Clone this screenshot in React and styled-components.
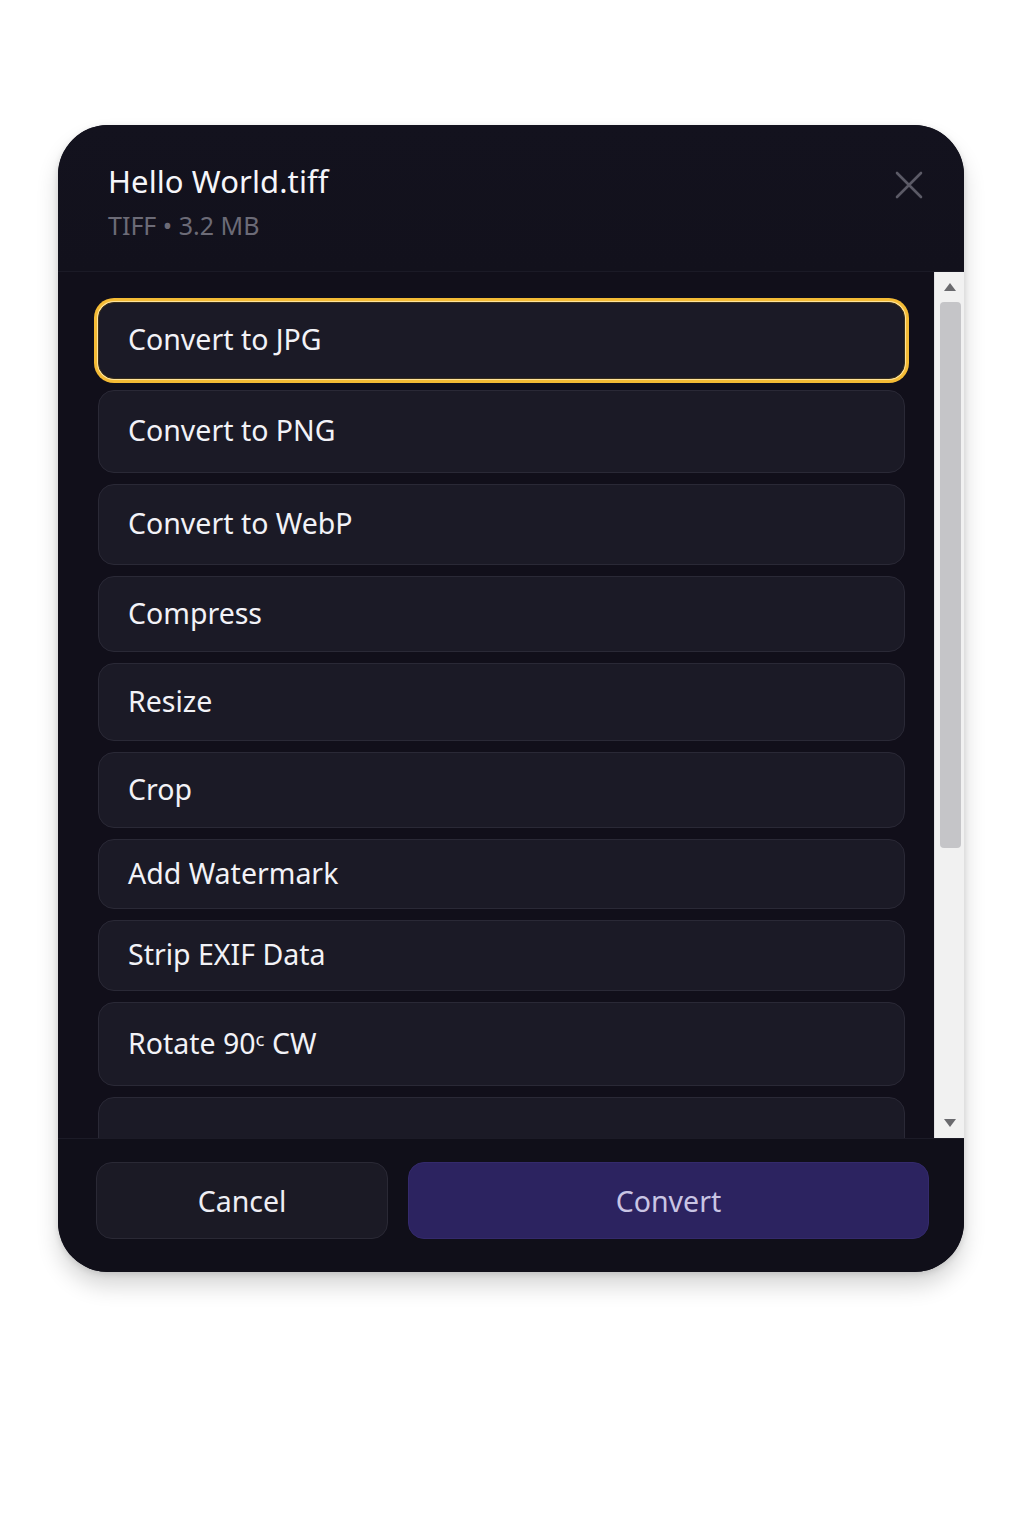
import React from "react";
import styled, { createGlobalStyle } from "styled-components";

const GlobalStyle = createGlobalStyle`
  html, body {
    margin: 0;
    padding: 0;
    background: #ffffff;
  }
  body {
    font-family: "Noto Sans", "Open Sans", "Liberation Sans", sans-serif;
  }
  * {
    box-sizing: border-box;
  }
`;

// row heights follow the reference list, which isn't perfectly even
const ACTIONS = [
  { label: "Convert to JPG", h: 77 },
  { label: "Convert to PNG", h: 83 },
  { label: "Convert to WebP", h: 81 },
  { label: "Compress", h: 76 },
  { label: "Resize", h: 78 },
  { label: "Crop", h: 76 },
  { label: "Add Watermark", h: 70 },
  { label: "Strip EXIF Data", h: 71 },
  { label: "Rotate 90\u1D9C CW", h: 84 },
  { label: "", h: 80 },
];

export default function App() {
  return (
    <>
      <GlobalStyle />
      <Page>
        <Modal>
          <Header>
            <div>
              <Title>Hello World.tiff</Title>
              <Meta>TIFF • 3.2 MB</Meta>
            </div>
            <CloseButton aria-label="Close">
              <svg width="28" height="28" viewBox="0 0 28 28" fill="none">
                <path
                  d="M2 2L26 26M26 2L2 26"
                  stroke="#5b5a66"
                  strokeWidth="2.6"
                  strokeLinecap="round"
                />
              </svg>
            </CloseButton>
          </Header>
          <Body>
            <List>
              {ACTIONS.map((a, i) => (
                <Item key={i} $active={i === 0} $h={a.h}>
                  {a.label}
                </Item>
              ))}
            </List>
            <Scrollbar>
              <Arrow>
                <svg width="14" height="10" viewBox="0 0 14 10">
                  <path d="M7 1L13 9H1Z" fill="#6a6a6e" />
                </svg>
              </Arrow>
              <Track>
                <Thumb />
              </Track>
              <Arrow>
                <svg width="14" height="10" viewBox="0 0 14 10">
                  <path d="M1 1H13L7 9Z" fill="#6a6a6e" />
                </svg>
              </Arrow>
            </Scrollbar>
          </Body>
          <Footer>
            <CancelButton>Cancel</CancelButton>
            <ConvertButton>Convert</ConvertButton>
          </Footer>
        </Modal>
      </Page>
    </>
  );
}

const Page = styled.div`
  width: 1024px;
  min-height: 1536px;
  padding: 125px 60px 0 58px;
`;

const Modal = styled.div`
  width: 906px;
  height: 1147px;
  display: flex;
  flex-direction: column;
  background: #13121d;
  border-radius: 50px;
  overflow: hidden;
  box-shadow: 0 14px 22px rgba(0, 0, 0, 0.16), 0 2px 6px rgba(0, 0, 0, 0.12);
`;

const Header = styled.div`
  height: 147px;
  flex-shrink: 0;
  display: flex;
  justify-content: space-between;
  align-items: flex-start;
  padding: 35px 41px 0 50px;
  background: linear-gradient(180deg, #13121e 0%, #12111c 100%);
  border-bottom: 1px solid #1b1a26;
`;

const Title = styled.h1`
  margin: 0;
  font-size: 31px;
  font-weight: 400;
  line-height: 42px;
  color: #f6f6fa;
  letter-spacing: 0.1px;
`;

const Meta = styled.p`
  margin: 7px 0 0;
  font-size: 25px;
  line-height: 32px;
  color: #6c6b77;
`;

const CloseButton = styled.button`
  margin-top: 11px;
  padding: 0;
  border: none;
  background: transparent;
  display: flex;
  cursor: pointer;
`;

const Body = styled.div`
  flex: 1;
  min-height: 0;
  display: flex;
  background: #110f1a;
`;

const List = styled.div`
  flex: 1;
  overflow: hidden;
  display: flex;
  flex-direction: column;
  gap: 11px;
  padding: 30px 29px 0 40px;
`;

const Item = styled.button`
  flex-shrink: 0;
  height: ${(p) => p.$h}px;
  width: 100%;
  display: flex;
  align-items: center;
  padding: 0 29px 3px;
  border-radius: 16px;
  border: 1px solid ${(p) => (p.$active ? "#3a2f1a" : "#2a2936")};
  background: #1b1a26;
  color: #f2f2f7;
  font-family: inherit;
  font-size: 28.5px;
  text-align: left;
  cursor: pointer;
  box-shadow: ${(p) =>
    p.$active ? "0 0 0 1px #ffe39a, 0 0 0 4px #f4bb35" : "none"};
`;

const Scrollbar = styled.div`
  width: 30px;
  flex-shrink: 0;
  display: flex;
  flex-direction: column;
  background: #f1f1f1;
  border-left: 1px solid #e2e2e4;
`;

const Arrow = styled.div`
  height: 30px;
  flex-shrink: 0;
  display: flex;
  align-items: center;
  justify-content: center;
`;

const Track = styled.div`
  flex: 1;
  padding: 0 3px 0 5px;
`;

const Thumb = styled.div`
  height: 546px;
  border-radius: 4px;
  background: #c5c5c8;
`;

const Footer = styled.div`
  height: 134px;
  flex-shrink: 0;
  display: grid;
  grid-template-columns: 292px 1fr;
  gap: 20px;
  padding: 23px 35px 34px 38px;
  background: #100f19;
  border-top: 1px solid #1c1b27;
`;

const BaseButton = styled.button`
  height: 77px;
  border-radius: 16px;
  font-family: inherit;
  font-size: 28.5px;
  cursor: pointer;
`;

const CancelButton = styled(BaseButton)`
  background: #1b1a25;
  border: 1px solid #2a2935;
  color: #eeeef4;
`;

const ConvertButton = styled(BaseButton)`
  background: #2c2360;
  border: 1px solid #342a6c;
  color: #c9c5e4;
`;
